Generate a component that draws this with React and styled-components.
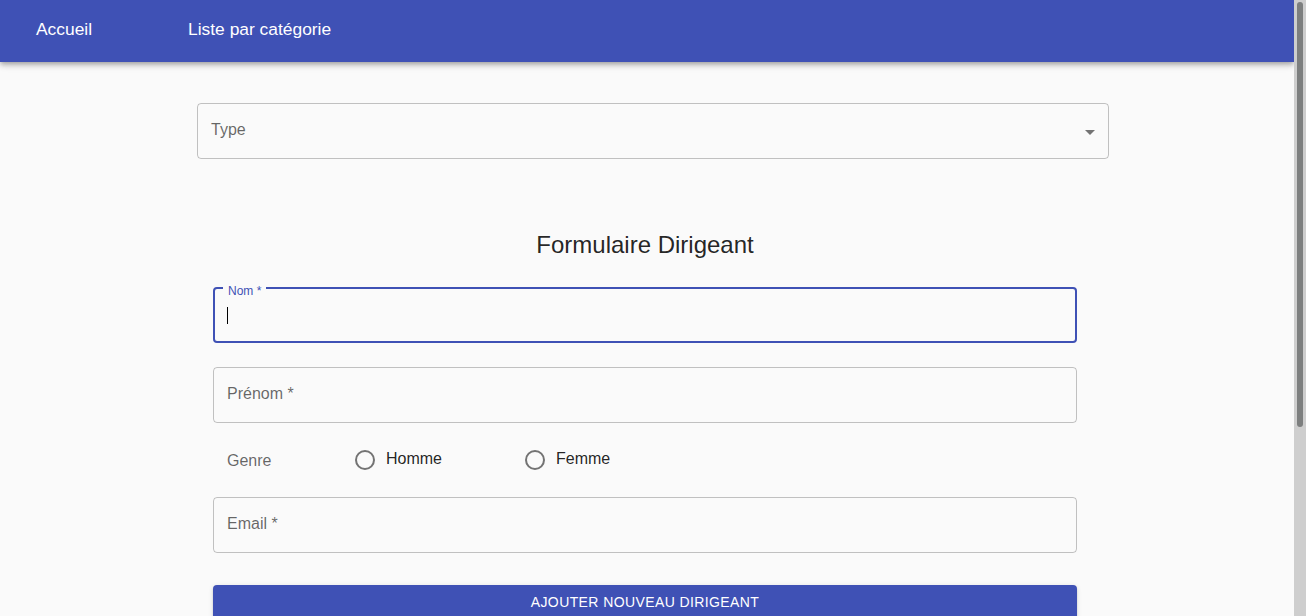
import React from 'react'
import styled, { createGlobalStyle } from 'styled-components'

const GlobalStyle = createGlobalStyle`
    body {
        margin: 0;
        background-color: #fafafa;
        font-family: "Liberation Sans", Arial, sans-serif;
    }
`

const Page = styled.div`
    min-height: 888px;
    width: calc(100% - 12px);
`

// the window's scrollbar, as it shows in the screenshot
const ScrollTrack = styled.div`
    position: fixed;
    top: 0;
    right: 0;
    width: 12px;
    height: 100vh;
    background-color: #cecece;
    z-index: 10;
`

const ScrollThumb = styled.div`
    position: absolute;
    top: 2px;
    left: 3px;
    width: 6px;
    height: 425px;
    border-radius: 3px;
    background-color: #7d7f7f;
`

const AppBar = styled.header`
    height: 62px;
    background-color: #3f51b5;
    box-shadow: 0px 2px 4px -1px rgba(0,0,0,0.2), 0px 4px 5px 0px rgba(0,0,0,0.14), 0px 1px 10px 0px rgba(0,0,0,0.12);
    display: flex;
    align-items: flex-start;
    padding: 18px 0 0 36px;
    box-sizing: border-box;
`

const NavItem = styled.a`
    color: #ffffff;
    font-size: 17.4px;
    line-height: 22px;
    text-decoration: none;
    margin-right: ${(p) => p.gap || 0}px;
    cursor: pointer;
`

const Main = styled.main`
    padding-top: 41px;
`

const SelectBox = styled.div`
    margin-left: 197px;
    width: 912px;
    height: 56px;
    box-sizing: border-box;
    border: 1px solid rgba(0,0,0,0.23);
    border-radius: 4px;
    display: flex;
    align-items: center;
    justify-content: space-between;
    padding: 0 13px 0 13px;
`

const Placeholder = styled.span`
    color: rgba(0,0,0,0.6);
    font-size: 16px;
    margin-top: -3px;
`

const Arrow = styled.span`
    width: 0;
    height: 0;
    border-left: 5px solid transparent;
    border-right: 5px solid transparent;
    border-top: 5px solid rgba(0,0,0,0.54);
    margin-top: 3px;
`

const Form = styled.form`
    margin-left: 213px;
    width: 864px;
    padding-top: 70px;
    display: flex;
    flex-direction: column;
`

const Title = styled.h2`
    margin: 0 0 26px;
    font-size: 24px;
    font-weight: 400;
    line-height: 32px;
    text-align: center;
    color: rgba(0,0,0,0.87);
`

const Field = styled.div`
    position: relative;
    height: 56px;
    box-sizing: border-box;
    border: ${(p) => (p.focused ? '2px solid #3f51b5' : '1px solid rgba(0,0,0,0.23)')};
    border-radius: 4px;
    margin-bottom: ${(p) => p.mb || 0}px;
    display: flex;
    align-items: center;
    padding-left: ${(p) => (p.focused ? 12 : 13)}px;
`

const FieldLabel = styled.span`
    color: rgba(0,0,0,0.6);
    font-size: 16px;
    margin-top: -2px;
`

const FloatLabel = styled.span`
    position: absolute;
    left: 8px;
    top: -5px;
    padding: 0 5px;
    background-color: #fafafa;
    color: #3f51b5;
    font-size: 12px;
    line-height: 14px;
`

const Caret = styled.span`
    display: block;
    width: 1px;
    height: 17px;
    background-color: #000;
    margin-top: 1px;
`

const RadioRow = styled.div`
    height: 74px;
    display: flex;
    align-items: center;
    padding-left: 14px;
`

const GroupLabel = styled.span`
    color: rgba(0,0,0,0.6);
    font-size: 16px;
    width: 128px;
    margin-top: 1px;
`

const RadioOption = styled.label`
    display: flex;
    align-items: center;
    width: ${(p) => p.w}px;
    color: rgba(0,0,0,0.87);
    font-size: 16px;
    margin-top: -2px;
    cursor: pointer;
`

const RadioCircle = styled.span`
    width: 16px;
    height: 16px;
    border: 2px solid rgba(0,0,0,0.54);
    border-radius: 50%;
    margin-right: 11px;
    margin-top: 2px;
`

const SubmitButton = styled.button`
    margin-top: 32px;
    height: 36px;
    border: none;
    border-radius: 4px;
    background-color: #3f51b5;
    color: #ffffff;
    font-family: "Liberation Sans", Arial, sans-serif;
    font-size: 14px;
    letter-spacing: 0.4px;
    text-transform: uppercase;
    box-shadow: 0px 3px 1px -2px rgba(0,0,0,0.2), 0px 2px 2px 0px rgba(0,0,0,0.14), 0px 1px 5px 0px rgba(0,0,0,0.12);
    padding-bottom: 3px;
    cursor: pointer;
`

const App = () => {
    return (
        <Page>
            <GlobalStyle />
            <ScrollTrack>
                <ScrollThumb />
            </ScrollTrack>
            <AppBar>
                <NavItem gap={96}>Accueil</NavItem>
                <NavItem>Liste par catégorie</NavItem>
            </AppBar>
            <Main>
                <SelectBox>
                    <Placeholder>Type</Placeholder>
                    <Arrow />
                </SelectBox>
                <Form onSubmit={(e) => e.preventDefault()}>
                    <Title>Formulaire Dirigeant</Title>
                    <Field focused mb={24}>
                        <FloatLabel>Nom *</FloatLabel>
                        <Caret />
                    </Field>
                    <Field>
                        <FieldLabel>Prénom *</FieldLabel>
                    </Field>
                    <RadioRow>
                        <GroupLabel>Genre</GroupLabel>
                        <RadioOption w={170}>
                            <RadioCircle />
                            Homme
                        </RadioOption>
                        <RadioOption w={120}>
                            <RadioCircle />
                            Femme
                        </RadioOption>
                    </RadioRow>
                    <Field>
                        <FieldLabel>Email *</FieldLabel>
                    </Field>
                    <SubmitButton type="submit">Ajouter nouveau dirigeant</SubmitButton>
                </Form>
            </Main>
        </Page>
    )
}

export default App
